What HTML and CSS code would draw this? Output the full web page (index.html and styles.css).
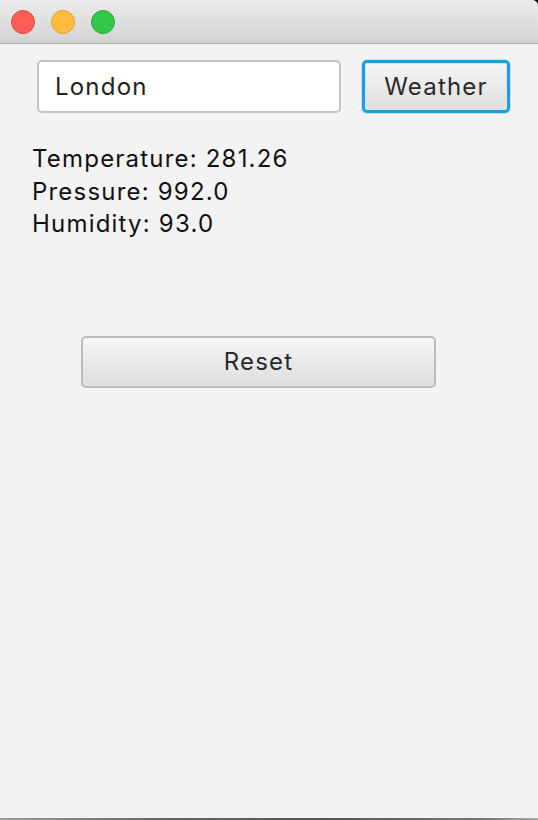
FILE: index.html
```html
<!DOCTYPE html>
<html>
<head>
<meta charset="utf-8">
<link rel="stylesheet" href="styles.css">
</head>
<body>
<div class="window">
  <div class="titlebar">
    <span class="light red"></span>
    <span class="light yellow"></span>
    <span class="light green"></span>
  </div>
  <div class="content">
    <div class="search-row">
      <div class="field">London</div>
      <button class="btn weather">Weather</button>
    </div>
    <div class="results">
      <div class="line">Temperature: 281.26</div>
      <div class="line">Pressure: 992.0</div>
      <div class="line">Humidity: 93.0</div>
    </div>
    <button class="btn reset">Reset</button>
  </div>
</div>
<div class="bottom-edge"></div>
</body>
</html>
```

FILE: styles.css
```css
html, body {
  margin: 0;
  padding: 0;
  background: #000;
}
body {
  width: 538px;
  height: 820px;
  overflow: hidden;
  font-family: Inter, "Liberation Sans", sans-serif;
  letter-spacing: 1.2px;
}
.window {
  height: 818px;
  background: #f3f3f3;
  border-top-right-radius: 6px;
  overflow: hidden;
  display: flex;
  flex-direction: column;
}
.titlebar {
  height: 43px;
  flex: none;
  background: linear-gradient(#ebebeb, #d3d3d3);
  border-bottom: 1px solid #b3b3b3;
  display: flex;
  align-items: center;
  padding-left: 11px;
  gap: 16px;
}
.light {
  width: 24px;
  height: 24px;
  border-radius: 50%;
  box-sizing: border-box;
}
.red { background: #fd5f58; border: 1px solid #e2463f; }
.yellow { background: #febd3f; border: 1px solid #e0a42c; }
.green { background: #34c749; border: 1px solid #22ab33; }
.content {
  display: flex;
  flex-direction: column;
}
.search-row {
  display: flex;
  align-items: center;
  padding: 16px 0 0 37px;
  gap: 21px;
}
.field {
  box-sizing: border-box;
  width: 304px;
  height: 53px;
  background: #fff;
  border: 2px solid #c4c4c4;
  border-radius: 5px;
  padding-left: 16px;
  display: flex;
  align-items: center;
  font-size: 24px;
  color: #222;
}
.btn {
  font-family: Inter, "Liberation Sans", sans-serif;
  letter-spacing: 1.2px;
  font-size: 24px;
  color: #2a2a2a;
  background: linear-gradient(#f6f6f6, #dedede);
  box-sizing: border-box;
  border-radius: 5px;
  padding: 0;
  margin: 0;
}
.weather {
  width: 148px;
  height: 53px;
  border: 3px solid #1aa0da;
  box-shadow: 0 0 0 1px rgba(100, 185, 230, 0.35), inset 0 0 0 1px #cfe6f2;
}
.results {
  padding: 30px 0 0 32px;
  font-size: 24px;
  line-height: 32.5px;
  color: #111;
}
.reset {
  align-self: flex-start;
  margin: 95px 0 0 81px;
  width: 355px;
  height: 52px;
  border: 2px solid #bcbcbc;
}
.bottom-edge {
  height: 2px;
  background: linear-gradient(90deg, #9a9a9a, #666 30%, #555 60%, #777 90%, #aaa);
}
```
